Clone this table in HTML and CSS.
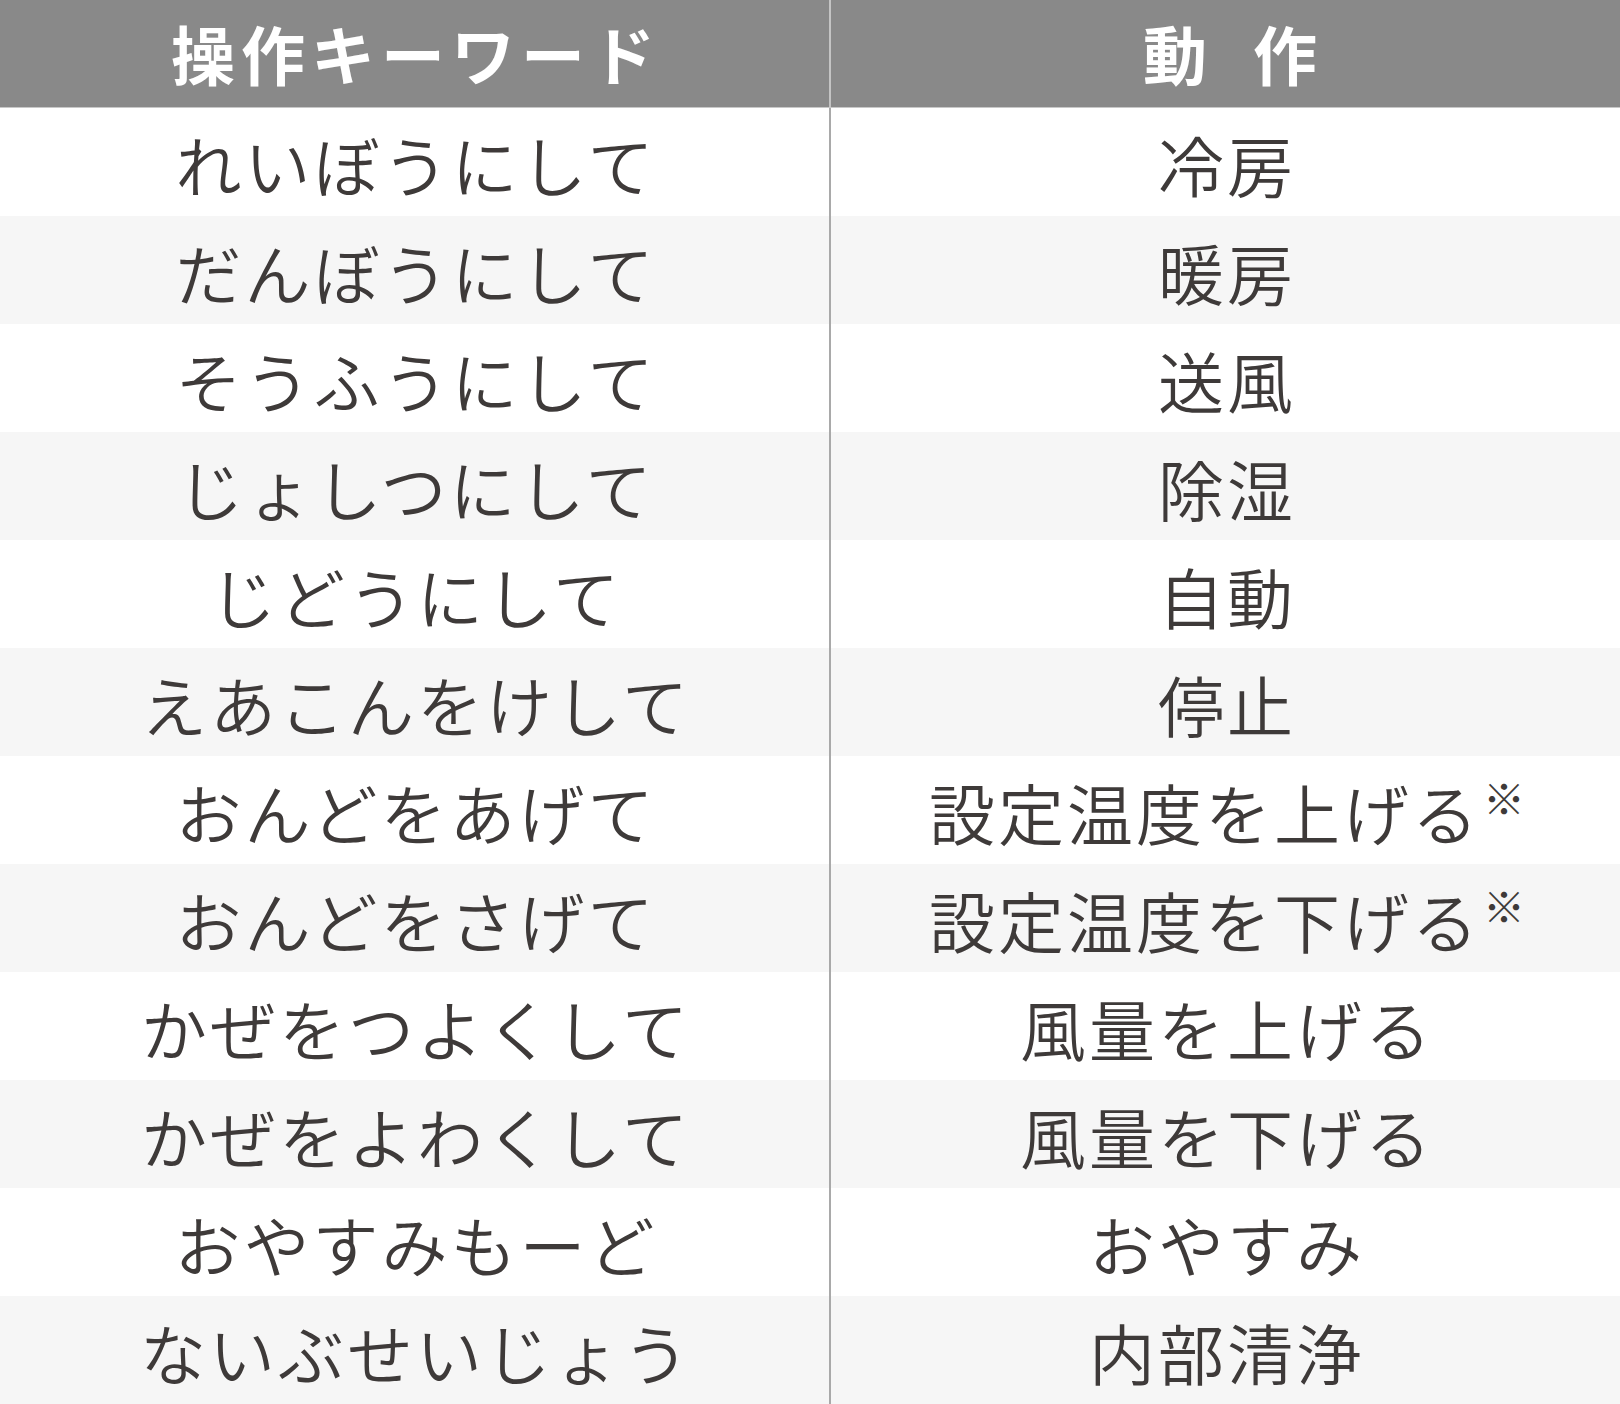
FILE: index.html
```html
<!DOCTYPE html>
<html lang="ja">
<head>
<meta charset="utf-8">
<link rel="stylesheet" href="styles.css">
</head>
<body>
<div class="table">
  <div class="row head">
    <div class="cell key">操作キーワード</div>
    <div class="cell act">動　作</div>
  </div>
  <div class="row"><div class="cell key">れいぼうにして</div><div class="cell act">冷房</div></div>
  <div class="row alt"><div class="cell key">だんぼうにして</div><div class="cell act">暖房</div></div>
  <div class="row"><div class="cell key">そうふうにして</div><div class="cell act">送風</div></div>
  <div class="row alt"><div class="cell key">じょしつにして</div><div class="cell act">除湿</div></div>
  <div class="row"><div class="cell key">じどうにして</div><div class="cell act">自動</div></div>
  <div class="row alt"><div class="cell key">えあこんをけして</div><div class="cell act">停止</div></div>
  <div class="row"><div class="cell key">おんどをあげて</div><div class="cell act">設定温度を上げる<span class="note">※</span></div></div>
  <div class="row alt"><div class="cell key">おんどをさげて</div><div class="cell act">設定温度を下げる<span class="note">※</span></div></div>
  <div class="row"><div class="cell key">かぜをつよくして</div><div class="cell act">風量を上げる</div></div>
  <div class="row alt"><div class="cell key">かぜをよわくして</div><div class="cell act">風量を下げる</div></div>
  <div class="row"><div class="cell key">おやすみもーど</div><div class="cell act">おやすみ</div></div>
  <div class="row alt"><div class="cell key">ないぶせいじょう</div><div class="cell act">内部清浄</div></div>
</div>
</body>
</html>
```

FILE: styles.css
```css
html, body {
  margin: 0;
  padding: 0;
  background: #ffffff;
}
body {
  font-family: "Noto Sans CJK JP", "Noto Sans", sans-serif;
  color: #3e3a39;
}
.table {
  display: flex;
  flex-direction: column;
  width: 1620px;
}
.row {
  display: grid;
  grid-template-columns: 829px 2px 789px;
  height: 108px;
  background: #ffffff;
}
.row::before {
  content: "";
  grid-column: 2;
  grid-row: 1;
  background: #a9a9a9;
}
.row.alt {
  background: #f6f6f6;
}
.cell {
  display: flex;
  align-items: center;
  justify-content: center;
  font-size: 66px;
  font-weight: 350;
  letter-spacing: 3px;
  line-height: 1;
  white-space: nowrap;
  padding-left: 3px;
  padding-top: 2px;
}
.cell.key {
  grid-column: 1;
  grid-row: 1;
}
.cell.act {
  grid-column: 3;
  grid-row: 1;
}
.row.head {
  background: #898989;
  height: 107px;
  border-bottom: 1px solid #c8c8c8;
}
.row.head::before {
  background: #c4c4c4;
}
.row.head .cell {
  color: #ffffff;
  font-weight: 700;
  font-size: 64px;
  letter-spacing: 6px;
  padding-top: 0;
  padding-bottom: 4px;
}
.row.head .cell.act {
  letter-spacing: -9px;
  padding-left: 0;
}
.note {
  font-size: 42px;
  letter-spacing: 0;
  align-self: flex-start;
  margin-top: 18px;
  margin-left: 2px;
}
```
